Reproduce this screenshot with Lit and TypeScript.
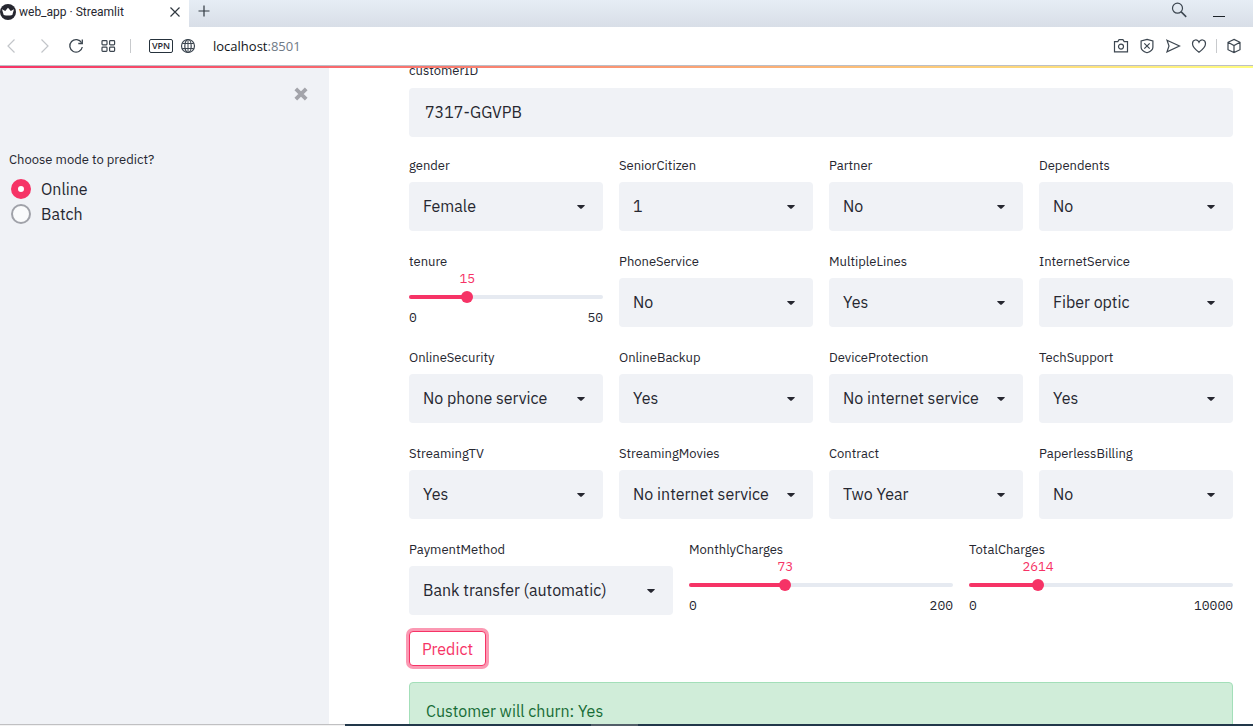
import { LitElement, html, css, svg } from "lit";
import { customElement, property } from "lit/decorators.js";

const YES_NO = ["Yes", "No"];
const SERVICE = ["Yes", "No", "No internet service", "No phone service"];

@customElement("select-field")
class SelectField extends LitElement {
  @property() label = "";
  @property() value = "";
  @property({ attribute: false }) options: string[] = [];

  static styles = css`
    :host { display: block; min-width: 0; }
    label { display: block; padding-top: 5px; line-height: 19px; margin-bottom: 7px; font-size: 13px; color: #262730; }
    .box { display: grid; align-items: center; }
    select {
      grid-area: 1 / 1; width: 100%; height: 49px; padding: 0 36px 2px 14px; border: 0; border-radius: 4px;
      background: #f0f2f6; color: #262730; font: inherit; font-size: 16px; appearance: none; outline: none;
    }
    svg { grid-area: 1 / 1; justify-self: end; margin-right: 18px; pointer-events: none; }
  `;

  render() {
    return html`
      <label for="select">${this.label}</label>
      <div class="box">
        <select id="select">
          ${this.options.map((o) => html`<option ?selected=${o === this.value}>${o}</option>`)}
        </select>
        <svg width="8" height="4" viewBox="0 0 8 4"><path d="M.3 0h7.400v.8L4.800 3.500q-.8.6-1.600 0L.3.8z" fill="#262730" /></svg>
      </div>
    `;
  }
}

@customElement("slider-field")
class SliderField extends LitElement {
  @property() label = "";
  @property({ type: Number }) value = 0;
  @property({ type: Number }) max = 100;

  static styles = css`
    :host { display: block; min-width: 0; }
    label { display: block; padding-top: 5px; line-height: 19px; font-size: 13px; color: #262730; }
    .value, .ticks { font-family: "IBM Plex Mono", "Liberation Mono", monospace; font-size: 13px; }
    .value { display: flex; justify-content: center; width: 0; line-height: 15px; color: #f63366; }
    .track { position: relative; height: 4px; margin: 9px 0 10px; border-radius: 2px; background: #e6eaf1; }
    .fill { height: 4px; border-radius: 2px; background: #f63366; }
    input {
      position: absolute; top: -4px; left: -6px; width: calc(100% + 12px); height: 12px; margin: 0;
      appearance: none; background: none; outline: none;
    }
    input::-webkit-slider-thumb { appearance: none; width: 12px; height: 12px; border-radius: 50%; background: #f63366; }
    .ticks { display: flex; justify-content: space-between; line-height: 17px; color: #262730; }
  `;

  render() {
    const share = (this.value / this.max) * 100;
    return html`
      <label for="range">${this.label}</label>
      <div class="value" style="margin-left:${share}%">${this.value}</div>
      <div class="track">
        <div class="fill" style="width:${share}%"></div>
        <input id="range" type="range" min="0" max=${this.max} .value=${String(this.value)} />
      </div>
      <div class="ticks"><span>0</span><span>${this.max}</span></div>
    `;
  }
}

const line = (size: number, body: unknown, color = "#3c4650") => html`
  <svg width=${size} height=${size} viewBox="0 0 16 16" fill="none" stroke=${color} stroke-width="1.2">${body}</svg>
`;

const icons = {
  back: line(16, svg`<path d="M10.500 1.500 4 8l6.500 6.500" />`, "#c2c5c9"),
  forward: line(16, svg`<path d="M5.500 1.500 12 8l-6.500 6.500" />`, "#c2c5c9"),
  reload: line(16, svg`<path d="M13.600 4.800A6.300 6.300 0 1 0 14.300 9" stroke-width="1.300"/><path d="M14.300 1.500v4h-4" stroke-width="1.300" />`),
  speed: line(16, svg`<rect x="2" y="2.600" width="5" height="4.200" rx=".8"/><rect x="9.600" y="2.600" width="5" height="4.200" rx=".8"/><rect x="2" y="9.200" width="5" height="4.200" rx=".8"/><rect x="9.600" y="9.200" width="5" height="4.200" rx=".8"/>`),
  globe: line(16, svg`<circle cx="8" cy="8" r="6.500"/><ellipse cx="8" cy="8" rx="3.200" ry="6.500"/><path d="M2.300 5.500h11.400M2.300 10.500h11.400M8 1.500v13" stroke-width="1"/>`),
  camera: line(16, svg`<path d="M1.500 3.600h3.300l1.300-2h3.800l1.300 2h3.300v10.300h-13z"/><circle cx="8" cy="8.600" r="2.500"/>`),
  shield: line(16, svg`<path d="M8 1.300 13.900 3v6.200c0 2.700-2.500 4.400-5.900 5.500-3.400-1.100-5.900-2.800-5.900-5.500V3z"/><path d="m5.300 5.300 5.400 5.400m0-5.400-5.400 5.400"/>`),
  send: line(16, svg`<path d="M2 2.200 14.500 8 2 13.800 4 8z"/>`),
  heart: line(16, svg`<path d="M8 14.300C4.500 11.600 1.500 9 1.500 5.700c0-4.500 5.100-4.900 6.500-1.500 1.400-3.400 6.500-3 6.500 1.500C14.500 9 11.500 11.600 8 14.300z"/>`),
  cube: line(16, svg`<path d="m8 1.400 6 2.900v7.400l-6 2.900-6-2.900V4.300zM2 4.300l6 3.200 6-3.200M8 7.500v7.100"/>`),
  search: line(16, svg`<circle cx="6.500" cy="6.200" r="5"/><path d="m10.200 9.900 5 5" stroke-width="1.500"/>`),
  minimize: line(16, svg`<path d="M2 14.500h12" stroke-width="1"/>`, "#1c2228"),
  close: line(16, svg`<path d="m3.500 3.500 9 9m0-9-9 9"/>`, "#303840"),
  plus: line(16, svg`<path d="M8 2.500v11M2.500 8h11"/>`, "#303840"),
};

@customElement("app-root")
class AppRoot extends LitElement {
  static styles = css`
    :host {
      display: flex; flex-direction: column; height: 100vh; overflow: hidden; background: #fff;
      color: #262730; font-family: "IBM Plex Sans", Roboto, "Liberation Sans", sans-serif; font-size: 16px;
    }
    button { padding: 0; border: 0; background: none; font: inherit; color: inherit; }
    svg { display: block; }

    .tabs { display: flex; height: 27px; flex: none; background: linear-gradient(#e6edf5, #d8dee7); font: 12px/16px "Segoe UI", Roboto, sans-serif; }
    .tab { display: flex; align-items: center; width: 189px; padding: 0 6px 4px 0; box-sizing: border-box; background: #fff; }
    .tab span { flex: 1; margin-left: 3px; white-space: nowrap; }
    .add { padding: 0 7px 6px; }
    .window { display: flex; gap: 24px; margin-left: auto; padding: 2px 26px 0 0; align-items: start; }

    .bar {
      display: flex; align-items: center; height: 38px; flex: none; padding: 0 11px 0 4px;
      border-bottom: 1px solid #bcbfc6; font: 13px/20px "Segoe UI", "Open Sans", sans-serif; background: #fff;
    }
    .nav { display: flex; gap: 16px; }
    .divider { width: 1px; height: 14px; background: #c8cacd; }
    .nav + .divider { margin: 0 18px 0 14px; }
    .vpn { width: 24px; height: 14px; box-sizing: border-box; border: 1px solid #26323c; border-radius: 2px; font: 600 9px/12px "Open Sans", sans-serif; text-align: center; }
    .globe { margin: 0 17px 0 7px; }
    .address { flex: 1; color: #101418; }
    .port { color: #6f7a86; }
    .tools { display: flex; align-items: center; gap: 10px; }
    .tools .divider { margin: 0 -1px; }

    .rainbow { height: 2px; flex: none; background: linear-gradient(to right, #f63366, #fffd80); position: relative; z-index: 1; }
    .page { display: flex; flex: 1; min-height: 0; }
    .side { flex: 0 0 329px; box-sizing: border-box; padding: 18px 9px 0; background: #f0f2f6; }
    .dismiss { display: block; margin: 0 11px 48px auto; }
    fieldset { margin: 0; padding: 0; border: 0; }
    legend { padding: 0; font-size: 13px; line-height: 19px; margin-bottom: 7px; }
    .option { display: flex; align-items: center; gap: 10px; height: 25px; padding-left: 2px; }
    .option input { appearance: none; width: 20px; height: 20px; margin: 0; box-sizing: border-box; border: 2px solid #a0a2a9; border-radius: 50%; background: #fafbfc; }
    .option input:checked { border: 7px solid #f63366; background: #fff; }

    .main { flex: 1; min-width: 0; padding: 0 20px 0 80px; display: flex; flex-direction: column; gap: 16px; }
    .customer { margin: -11px 0 -2px; }
    .customer label { display: block; padding-top: 4px; margin-bottom: 8px; font-size: 13px; line-height: 19px; }
    .customer input { display: block; width: 100%; height: 49px; box-sizing: border-box; padding: 0 16px 2px; border: 0; border-radius: 4px; background: #f0f2f6; font: inherit; color: inherit; outline: none; }
    .four, .three { display: grid; gap: 16px; flex: none; }
    .four { grid-template-columns: repeat(4, 1fr); }
    .three { grid-template-columns: repeat(3, 1fr); }
    .predict { flex: none; align-self: flex-start; height: 35px; padding: 0 12px; border: 1px solid #f63366; border-radius: 4px; color: #f63366; background: #fff; box-shadow: 0 0 0 3px #fb99b3; }
    .alert { flex: none; padding: 16px; border: 1px solid #a3dfb9; border-radius: 4px; background: #d0edd9; color: #176c36; line-height: 24px; }
    .taskbar { display: flex; height: 2px; flex: none; background: #22384a; position: relative; z-index: 1; }
    .start { width: 345px; height: 1px; background: #c0c0c2; border-bottom: 1px solid #f2f2f2; }
    .active { width: 47px; margin-left: 246px; background: #525e68; }
  `;

  private pick(label: string, value: string, options: string[]) {
    return html`<select-field .label=${label} .value=${value} .options=${options}></select-field>`;
  }

  private slide(label: string, value: number, max: number) {
    return html`<slider-field .label=${label} .value=${value} .max=${max}></slider-field>`;
  }

  private tool(name: string, icon: unknown) {
    return html`<button aria-label=${name}>${icon}</button>`;
  }

  private mode(name: string, checked = false) {
    return html`<label class="option"><input type="radio" name="mode" ?checked=${checked} />${name}</label>`;
  }

  render() {
    return html`
      <header class="tabs">
        <div class="tab">
          <svg width="16" height="16" viewBox="0 0 16 16"><circle cx="8" cy="8" r="8" fill="#262730"/><path d="M2 5.200 5.200 6.900 8 3.800l2.800 3.100L14 5.200l-1.700 5.900q-4.300 1-8.600 0z" fill="#fff"/></svg>
          <span>web_app · Streamlit</span>
          ${this.tool("Close tab", icons.close)}
        </div>
        <button class="add" aria-label="New tab">${icons.plus}</button>
        <div class="window">${this.tool("Search tabs", icons.search)}${this.tool("Minimize", icons.minimize)}</div>
      </header>
      <nav class="bar">
        <div class="nav">
          ${this.tool("Back", icons.back)}${this.tool("Forward", icons.forward)}${this.tool("Reload", icons.reload)}${this.tool("Speed dial", icons.speed)}
        </div>
        <div class="divider"></div>
        <button class="vpn">VPN</button>
        <div class="globe">${icons.globe}</div>
        <div class="address">localhost<span class="port">:8501</span></div>
        <div class="tools">
          ${this.tool("Snapshot", icons.camera)}${this.tool("Blocker", icons.shield)}${this.tool("Send", icons.send)}${this.tool("Bookmark", icons.heart)}
          <div class="divider"></div>
          ${this.tool("Extensions", icons.cube)}
        </div>
      </nav>
      <div class="rainbow"></div>
      <div class="page">
        <aside class="side">
          <button class="dismiss" aria-label="Close sidebar">
            <svg width="16" height="16" viewBox="0 0 16 16"><path d="m2.800 2.800 10.400 10.400m0-10.400L2.800 13.200" stroke="#a3a4aa" stroke-width="3.800" fill="none"/></svg>
          </button>
          <fieldset>
            <legend>Choose mode to predict?</legend>
            ${this.mode("Online", true)}${this.mode("Batch")}
          </fieldset>
        </aside>
        <main class="main">
          <div class="customer">
            <label for="customer">customerID</label>
            <input id="customer" type="text" value="7317-GGVPB" />
          </div>
          <div class="four">
            ${this.pick("gender", "Female", ["Female"])}
            ${this.pick("SeniorCitizen", "1", ["1"])}
            ${this.pick("Partner", "No", YES_NO)}
            ${this.pick("Dependents", "No", YES_NO)}
            ${this.slide("tenure", 15, 50)}
            ${this.pick("PhoneService", "No", YES_NO)}
            ${this.pick("MultipleLines", "Yes", SERVICE)}
            ${this.pick("InternetService", "Fiber optic", ["Fiber optic", "No"])}
            ${this.pick("OnlineSecurity", "No phone service", SERVICE)}
            ${this.pick("OnlineBackup", "Yes", SERVICE)}
            ${this.pick("DeviceProtection", "No internet service", SERVICE)}
            ${this.pick("TechSupport", "Yes", SERVICE)}
            ${this.pick("StreamingTV", "Yes", SERVICE)}
            ${this.pick("StreamingMovies", "No internet service", SERVICE)}
            ${this.pick("Contract", "Two Year", ["Two Year"])}
            ${this.pick("PaperlessBilling", "No", YES_NO)}
          </div>
          <div class="three">
            ${this.pick("PaymentMethod", "Bank transfer (automatic)", ["Bank transfer (automatic)"])}
            ${this.slide("MonthlyCharges", 73, 200)}
            ${this.slide("TotalCharges", 2614, 10000)}
          </div>
          <button class="predict">Predict</button>
          <div class="alert" role="status">Customer will churn: Yes</div>
        </main>
      </div>
      <footer class="taskbar"><div class="start"></div><div class="active"></div></footer>
    `;
  }
}
